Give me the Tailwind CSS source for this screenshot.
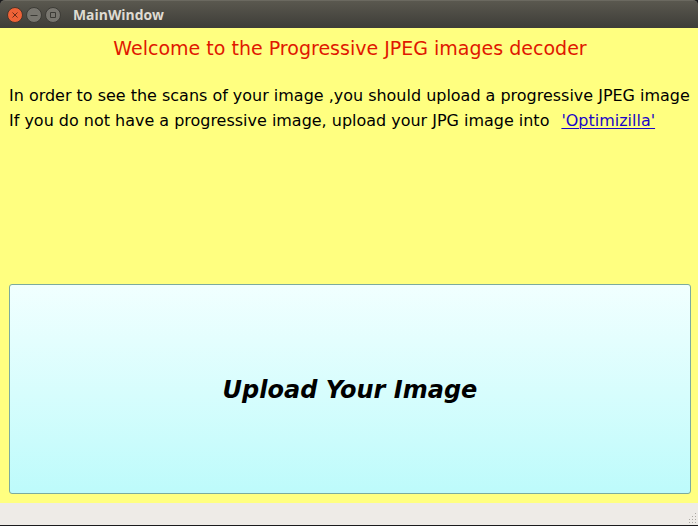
<!DOCTYPE html>
<html lang="en">
<head>
<meta charset="utf-8">
<title>MainWindow</title>
<script src="https://cdn.jsdelivr.net/npm/@tailwindcss/browser@4"></script>
</head>
<body class="w-[698px] h-[526px] overflow-hidden bg-[#1b1b1d] font-['DejaVu_Sans',sans-serif]">
<div class="w-full h-full flex flex-col">
  <header class="h-7 shrink-0 flex items-center gap-[3px] pl-[7px] pt-px rounded-t-[5px] bg-linear-to-b from-[#5a584f] to-[#3e3d38] border-t border-[#6b6960]">
    <svg class="w-4 h-4" viewBox="0 0 16 16"><circle cx="8" cy="8" r="7.5" fill="#ef6237" stroke="#45352c"/><path d="M5.5 5.5l5 5m0-5l-5 5" stroke="#6b2c18" stroke-width="1"/></svg>
    <svg class="w-4 h-4" viewBox="0 0 16 16"><circle cx="8" cy="8" r="7.5" fill="#78766f" stroke="#3c3b36"/><path d="M4.5 8.5h7" stroke="#3b3a35" stroke-width="1"/></svg>
    <svg class="w-4 h-4" viewBox="0 0 16 16"><circle cx="8" cy="8" r="7.5" fill="#78766f" stroke="#3c3b36"/><path d="M5.5 5.5h5v5h-5z" fill="none" stroke="#3b3a35" stroke-width="1"/></svg>
    <svg class="ml-[9px] w-[92px] h-5" viewBox="0 0 92 20"><text x="0" y="15" textLength="91" lengthAdjust="spacingAndGlyphs" class="font-['Open_Sans',sans-serif] font-bold text-[13.5px] fill-[#dfdbd2]">MainWindow</text></svg>
  </header>
  <main class="h-[475px] shrink-0 bg-[#ffff80] flex flex-col pl-[9px] pr-[7px] pb-[9px] whitespace-pre text-black">
    <h1 class="mt-2 h-6 leading-[25px] text-center text-[19.02px] text-[#e01800]">Welcome to the Progressive JPEG images decoder</h1>
    <p class="mt-[23px] h-[25px] leading-[25px] text-[15.98px]">In order to see the scans of your image ,you should upload a progressive JPEG image</p>
    <p class="h-[25px] leading-[25px] text-[15.98px]">If you do not have a progressive image, upload your JPG image into<a class="ml-3 text-[#1a05c8] underline underline-offset-2 decoration-1">'Optimizilla'</a></p>
    <button class="mt-auto h-[210px] pt-[2px] rounded-[3px] border border-[#7cab9e] bg-linear-to-b from-[#f1ffff] to-[#bdfbfb] text-2xl font-bold italic">Upload Your Image</button>
  </main>
  <footer class="h-[22px] shrink-0 bg-[#eeebe7] flex items-end justify-end">
    <svg class="w-[10px] h-[12px]" viewBox="0 0 10 12" fill="#aaa7a2"><path d="M7 0h1v1h-1zM4 3h1v1h-1zM7 3h1v1h-1zM1 6h1v1h-1zM4 6h1v1h-1zM7 6h1v1h-1zM1 9h1v1h-1zM4 9h1v1h-1zM7 9h1v1h-1z"/></svg>
  </footer>
</div>
</body>
</html>
